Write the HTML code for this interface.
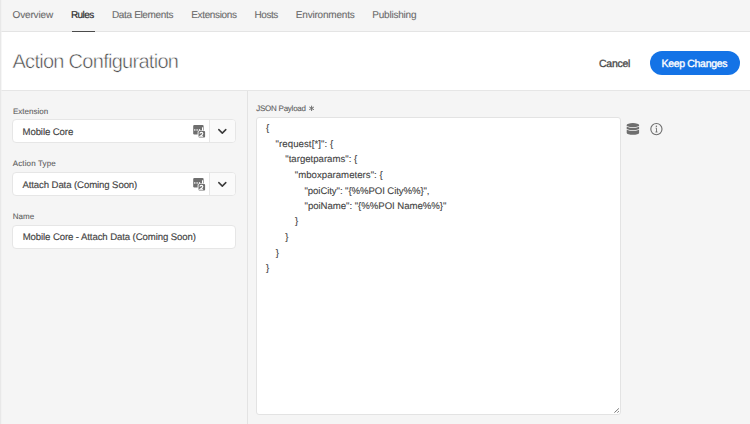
<!DOCTYPE html>
<html><head><meta charset="utf-8">
<style>
*{box-sizing:border-box;margin:0;padding:0}
html,body{width:750px;height:424px;overflow:hidden;background:#f5f5f5;font-family:"Liberation Sans",sans-serif;text-rendering:geometricPrecision}
.a{position:absolute;white-space:pre}
.nav{position:absolute;left:0;top:0;width:750px;height:32px;background:#f5f5f5;border-bottom:1px solid #e4e4e4}
.nv{position:absolute;top:11px;font-size:10px;line-height:10px;color:#6a6a6a;-webkit-text-stroke:0.1px #6a6a6a;white-space:pre}
.hdr{position:absolute;left:0;top:32px;width:750px;height:59px;background:#fff;border-bottom:1px solid #e6e6e6}
.lbl{position:absolute;font-size:8px;line-height:8px;color:#5e5e5e;-webkit-text-stroke:0.1px #5e5e5e;white-space:pre}
.inp{position:absolute;left:12px;width:224px;height:24px;background:#fff;border:1px solid #e6e6e6;border-radius:4px}
.itx{position:absolute;font-size:9.6px;line-height:9.6px;color:#444;-webkit-text-stroke:0.15px #444;letter-spacing:-0.1px;white-space:pre}
.seg{position:absolute;right:0;top:0;width:26px;height:22px;background:#fafafa;border-left:1px solid #e6e6e6;border-radius:0 3px 3px 0}
.code{position:absolute;font-size:9.6px;line-height:15.6px;color:#444;-webkit-text-stroke:0.12px #444;white-space:pre}
</style></head>
<body>
<div style="position:absolute;left:0;top:0;width:1px;height:424px;background:#e8e8e8;z-index:5"></div><div style="position:absolute;left:1px;top:0;width:1px;height:424px;background:#f0f0f0;z-index:5;opacity:.6"></div>
<div class="nav"></div>
<div class="nv" style="left:12.5px;letter-spacing:-0.14px">Overview</div>
<div class="nv" style="left:71px;color:#2c2c2c;-webkit-text-stroke:0.2px #2c2c2c;letter-spacing:-0.6px">Rules</div>
<div style="position:absolute;left:71.5px;top:31px;width:23px;height:2px;background:#4b4b4b"></div>
<div class="nv" style="left:112px;letter-spacing:-0.35px">Data Elements</div>
<div class="nv" style="left:191.3px;letter-spacing:-0.37px">Extensions</div>
<div class="nv" style="left:254.5px;letter-spacing:-0.44px">Hosts</div>
<div class="nv" style="left:295.8px;letter-spacing:-0.2px">Environments</div>
<div class="nv" style="left:372.3px;letter-spacing:-0.22px">Publishing</div>

<div class="hdr"></div>
<div class="a" style="left:12.5px;top:52.1px;font-size:20px;line-height:20px;color:#4b4b4b;-webkit-text-stroke:0.5px #fff;letter-spacing:-0.72px">Action Configuration</div>
<div class="a" style="left:599px;top:59px;font-size:10.5px;line-height:10.5px;color:#4b4b4b;-webkit-text-stroke:0.35px #4b4b4b;letter-spacing:-0.27px">Cancel</div>
<div style="position:absolute;left:649.5px;top:51px;width:90px;height:24px;border-radius:12px;background:#1473e6"></div>
<div class="a" style="left:661.5px;top:59px;font-size:10.5px;line-height:10.5px;color:#fff;-webkit-text-stroke:0.35px #fff;letter-spacing:-0.32px">Keep Changes</div>

<div style="position:absolute;left:247px;top:91px;width:1px;height:333px;background:#e3e3e3"></div>

<div class="lbl" style="left:13px;top:108px">Extension</div>
<div class="inp" style="top:119px"><div class="seg"></div></div>
<div class="itx" style="left:22.5px;top:128px">Mobile Core</div>
<svg class="de" style="position:absolute;left:190px;top:122px" width="18" height="18" viewBox="0 0 18 18">
<rect x="3.2" y="2.9" width="10.4" height="9.6" rx="1.2" fill="#6e6e6e"/>
<rect x="4.2" y="7.2" width="1.2" height="1.5" fill="#fff"/>
<rect x="6.5" y="7.2" width="1.2" height="1.5" fill="#fff"/>
<rect x="8.9" y="7.2" width="1.2" height="1.5" fill="#fff"/>
<rect x="12" y="5.3" width="1" height="3.4" fill="#fff"/>
<rect x="7.6" y="8.4" width="8.3" height="7.9" rx="1.5" fill="#fff"/>
<rect x="8.5" y="9.1" width="6.6" height="6.4" rx="1" fill="#6e6e6e"/>
<path d="M9.9 11.6 Q10.1 10.4 11.4 10.4 Q12.8 10.4 12.8 11.6 Q12.8 12.4 11.6 13.2 L10 14.3 H13.1" fill="none" stroke="#fff" stroke-width="1.1"/>
</svg>
<svg style="position:absolute;left:216px;top:127px" width="12" height="9" viewBox="0 0 12 9">
<path d="M2.8 2.6 L6.3 6.1 L9.8 2.6" fill="none" stroke="#3a3a3a" stroke-width="1.5" stroke-linecap="round" stroke-linejoin="round"/>
</svg>


<div class="lbl" style="left:12.8px;top:160px;letter-spacing:0.12px">Action Type</div>
<div class="inp" style="top:172px"><div class="seg"></div></div>
<div class="itx" style="left:22.4px;top:181px">Attach Data (Coming Soon)</div>
<svg class="de" style="position:absolute;left:190px;top:175px" width="18" height="18" viewBox="0 0 18 18">
<rect x="3.2" y="2.9" width="10.4" height="9.6" rx="1.2" fill="#6e6e6e"/>
<rect x="4.2" y="7.2" width="1.2" height="1.5" fill="#fff"/>
<rect x="6.5" y="7.2" width="1.2" height="1.5" fill="#fff"/>
<rect x="8.9" y="7.2" width="1.2" height="1.5" fill="#fff"/>
<rect x="12" y="5.3" width="1" height="3.4" fill="#fff"/>
<rect x="7.6" y="8.4" width="8.3" height="7.9" rx="1.5" fill="#fff"/>
<rect x="8.5" y="9.1" width="6.6" height="6.4" rx="1" fill="#6e6e6e"/>
<path d="M9.9 11.6 Q10.1 10.4 11.4 10.4 Q12.8 10.4 12.8 11.6 Q12.8 12.4 11.6 13.2 L10 14.3 H13.1" fill="none" stroke="#fff" stroke-width="1.1"/>
</svg>
<svg style="position:absolute;left:216px;top:180px" width="12" height="9" viewBox="0 0 12 9">
<path d="M2.8 2.6 L6.3 6.1 L9.8 2.6" fill="none" stroke="#3a3a3a" stroke-width="1.5" stroke-linecap="round" stroke-linejoin="round"/>
</svg>


<div class="lbl" style="left:12.8px;top:213px">Name</div>
<div class="inp" style="top:225px"></div>
<div class="itx" style="left:22.7px;top:233px">Mobile Core - Attach Data (Coming Soon)</div>

<div class="lbl" style="left:256.2px;top:105px;letter-spacing:-0.24px">JSON Payload</div>
<svg style="position:absolute;left:306px;top:103px" width="10" height="10" viewBox="0 0 10 10"><path d="M5.6 2.7 V8 M3.3 4 L7.9 6.7 M3.3 6.7 L7.9 4" stroke="#707070" stroke-width="1" fill="none"/></svg>
<div style="position:absolute;left:256px;top:117px;width:365px;height:298px;background:#fff;border:1px solid #e3e3e3;border-radius:3px"></div>
<div class="code" style="left:266px;top:121px;letter-spacing:0px">{</div>
<div class="code" style="left:275.5px;top:137px;letter-spacing:0.09px">"request[*]": {</div>
<div class="code" style="left:285.3px;top:152px;letter-spacing:0.0px">"targetparams": {</div>
<div class="code" style="left:294.7px;top:168px;letter-spacing:0.04px">"mboxparameters": {</div>
<div class="code" style="left:304.5px;top:184px;letter-spacing:-0.08px">"poiCity": "{%%POI City%%}",</div>
<div class="code" style="left:304.5px;top:199px;letter-spacing:-0.03px">"poiName": "{%%POI Name%%}"</div>
<div class="code" style="left:295px;top:214px;letter-spacing:0px">}</div>
<div class="code" style="left:285.2px;top:230px;letter-spacing:0px">}</div>
<div class="code" style="left:275.7px;top:246px;letter-spacing:0px">}</div>
<div class="code" style="left:266px;top:261px;letter-spacing:0px">}</div>

<svg style="position:absolute;left:620px;top:115px" width="50" height="30" viewBox="0 0 50 30">
<path d="M6.7 9.9 A6.2 1.8 0 0 1 19.1 9.9 V11.05 Q12.9 13.65 6.7 11.05 Z" fill="#6e6e6e"/>
<path d="M6.7 11.75 Q12.9 14.35 19.1 11.75 V13.95 Q12.9 16.55 6.7 13.95 Z" fill="#6e6e6e"/>
<path d="M6.7 14.65 Q12.9 17.25 19.1 14.65 V18.0 A6.2 1.8 0 0 1 6.7 18.0 Z" fill="#6e6e6e"/>
<circle cx="36.4" cy="14.1" r="5.6" fill="none" stroke="#6e6e6e" stroke-width="1.1"/>
<circle cx="36.4" cy="11.3" r="0.75" fill="#6e6e6e"/>
<path d="M35.6 13.1 H36.5 V17 M35.4 17 H37.5" fill="none" stroke="#6e6e6e" stroke-width="0.9"/>
</svg>
<svg style="position:absolute;left:610px;top:404px" width="12" height="12" viewBox="0 0 12 12">
<path d="M4.4 8.6 L8.9 4.4 M7.4 8.6 L8.9 7.2" stroke="#777" stroke-width="1" fill="none"/>
</svg>
</body></html>
